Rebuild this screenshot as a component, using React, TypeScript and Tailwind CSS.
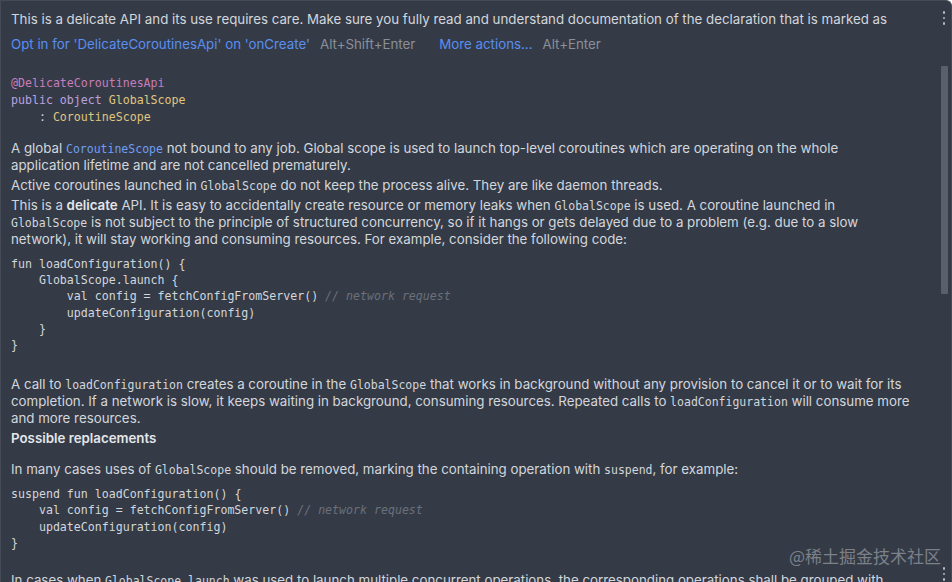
import React from "react";

const mono = "font-['DejaVu_Sans_Mono','Liberation_Mono',monospace]";

function C({ children }: { children: React.ReactNode }) {
  return <span className={`${mono} text-[11.5px] text-[#d3d6dc]`}>{children}</span>;
}

function Dots() {
  return (
    <div className="flex flex-col items-center gap-[3px]">
      <div className="w-[2.5px] h-[2.5px] rounded-full bg-[#b7bac0]" />
      <div className="w-[2.5px] h-[2.5px] rounded-full bg-[#b7bac0]" />
      <div className="w-[2.5px] h-[2.5px] rounded-full bg-[#b7bac0]" />
    </div>
  );
}

export default function App() {
  const line = "whitespace-nowrap h-[17px] leading-[17px]";
  const codeLine = "whitespace-pre h-[16.2px] leading-[16.2px]";
  const codeLine17 = "whitespace-pre h-[17px] leading-[17px]";
  const cm = "italic text-[#6b7079]";
  return (
    <div className="w-[952px] h-[582px] overflow-hidden relative bg-[#343b47] border-t border-r border-l border-[#454b56] rounded-tr-[6px] font-['Inter','Noto_Sans',sans-serif] text-[13.3px] text-[#d3d6dc]">
      <div className="pl-[10px] pt-[10px]">
        <div className={line}>
          This is a delicate API and its use requires care. Make sure you fully read and understand documentation of the declaration that is marked as
        </div>
        <div className={`${line} mt-[8px] flex`}>
          <span className="text-[#5a8ef0]">Opt in for 'DelicateCoroutinesApi' on 'onCreate'</span>
          <span className="ml-[10px] text-[#8b8f97]">Alt+Shift+Enter</span>
          <span className="ml-[24px] text-[#5a8ef0]">More actions...</span>
          <span className="ml-[10px] text-[#8b8f97]">Alt+Enter</span>
        </div>

        <div className={`${mono} text-[11.6px] mt-[22px]`}>
          <div className={`${codeLine17} text-[#c77dbb]`}>@DelicateCoroutinesApi</div>
          <div className={codeLine17}>
            <span className="text-[#b9a2e0]">public object </span>
            <span className="text-[#e0c67f]">GlobalScope</span>
          </div>
          <div className={codeLine17}>
            <span className="text-[#d3d6dc]">{"    : "}</span>
            <span className="text-[#e0c67f]">CoroutineScope</span>
          </div>
        </div>

        <div className="mt-[14px]">
          <div className={line}>
            A global <span className={`${mono} text-[11.5px] text-[#6f9ef5]`}>CoroutineScope</span> not bound to any job. Global scope is used to launch top-level coroutines which are operating on the whole
          </div>
          <div className={line}>application lifetime and are not cancelled prematurely.</div>
          <div className={`${line} mt-[3px]`}>
            Active coroutines launched in <C>GlobalScope</C> do not keep the process alive. They are like daemon threads.
          </div>
          <div className={`${line} mt-[3px]`}>
            This is a <span className="font-semibold text-[#e4e6ea]">delicate</span> API. It is easy to accidentally create resource or memory leaks when <C>GlobalScope</C> is used. A coroutine launched in
          </div>
          <div className={line}>
            <C>GlobalScope</C> is not subject to the principle of structured concurrency, so if it hangs or gets delayed due to a problem (e.g. due to a slow
          </div>
          <div className={line}>network), it will stay working and consuming resources. For example, consider the following code:</div>
        </div>

        <div className={`${mono} text-[11.6px] mt-[8px] text-[#d3d6dc]`}>
          <div className={codeLine}>fun loadConfiguration() {"{"}</div>
          <div className={codeLine}>{"    GlobalScope.launch {"}</div>
          <div className={codeLine}>
            {"        val config = fetchConfigFromServer() "}
            <span className={cm}>// network request</span>
          </div>
          <div className={codeLine}>{"        updateConfiguration(config)"}</div>
          <div className={codeLine}>{"    }"}</div>
          <div className={codeLine}>{"}"}</div>
        </div>

        <div className="mt-[23px]">
          <div className={line}>
            A call to <C>loadConfiguration</C> creates a coroutine in the <C>GlobalScope</C> that works in background without any provision to cancel it or to wait for its
          </div>
          <div className={line}>
            completion. If a network is slow, it keeps waiting in background, consuming resources. Repeated calls to <C>loadConfiguration</C> will consume more
          </div>
          <div className={line}>and more resources.</div>
          <div className={`${line} mt-[3px] font-semibold text-[#e4e6ea]`}>Possible replacements</div>
          <div className={`${line} mt-[14px]`}>
            In many cases uses of <C>GlobalScope</C> should be removed, marking the containing operation with <C>suspend</C>, for example:
          </div>
        </div>

        <div className={`${mono} text-[11.6px] mt-[8px] text-[#d3d6dc]`}>
          <div className={codeLine}>suspend fun loadConfiguration() {"{"}</div>
          <div className={codeLine}>
            {"    val config = fetchConfigFromServer() "}
            <span className={cm}>// network request</span>
          </div>
          <div className={codeLine}>{"    updateConfiguration(config)"}</div>
          <div className={codeLine}>{"}"}</div>
        </div>

        <div className={`${line} mt-[21px]`}>
          In cases when <C>GlobalScope.launch</C> was used to launch multiple concurrent operations, the corresponding operations shall be grouped with
        </div>
      </div>

      <div className="absolute right-[6px] top-[10px]">
        <Dots />
      </div>
      <div className="absolute right-[3px] top-[65px] w-[7px] h-[228px] bg-[#5a5f69] rounded-[1px]" />
      <div className="absolute right-[6px] top-[566px]">
        <Dots />
      </div>
      <div className="absolute right-[10px] top-[540px] text-[17px] leading-[30px] text-[#8e929a] opacity-80 font-['Noto_Sans_CJK_SC',sans-serif]">
        @稀土掘金技术社区
      </div>
    </div>
  );
}
